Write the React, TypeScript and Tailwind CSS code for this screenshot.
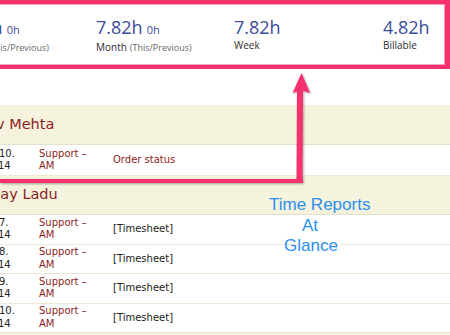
import React from "react";

const sans = { fontFamily: '"Open Sans", "Noto Sans", sans-serif' };
const dv = { fontFamily: '"DejaVu Sans", "Noto Sans", sans-serif' };

function Stat({ cls, value, prev, label, sub }: { cls: string; value: string; prev?: string; label: string; sub?: string }) {
  return (
    <div className={cls + " shrink-0 flex flex-col whitespace-nowrap"}>
      <div className="leading-[22px] text-[#3b4c9b]">
        <span className="text-[18px]">{value}</span>
        {prev ? <span className="text-[11px] ml-[4px]">{prev}</span> : null}
      </div>
      <div className="leading-[12px] text-[#2b2b2b] text-[10px]">
        {label}
        {sub ? <span className="text-[9px] text-[#666] ml-[3px]">{sub}</span> : null}
      </div>
    </div>
  );
}

function NameRow({ name, ml, h }: { name: string; ml: string; h: string }) {
  return (
    <div className={"flex items-center bg-[#f5f2de] border-b border-[#e3e0cd] " + h}>
      <span className={"text-[14.5px] text-[#8b1d1d] whitespace-nowrap " + ml}>{name}</span>
    </div>
  );
}

function Row({ d1, d2, desc, h, descRed }: { d1: string; d2: string; desc: string; h: string; descRed?: boolean }) {
  return (
    <div className={"flex items-center bg-white border-b border-[#ebe8d8] text-[10px] leading-[12.5px] " + h}>
      <div className="w-[39px] shrink-0 flex flex-col text-[#222]">
        <span className="ml-[-1px]">{d1}</span>
        <span className="ml-[-2px]">{d2}</span>
      </div>
      <div className="w-[74px] shrink-0 flex flex-col text-[#8b1d1d]">
        <span>Support –</span>
        <span>AM</span>
      </div>
      <div className={descRed ? "text-[#8b1d1d]" : "text-[#222]"}>{desc}</div>
    </div>
  );
}

export default function App() {
  return (
    <div className="relative w-[450px] h-[335px] overflow-hidden bg-white">
      <div className="h-[69px] border-t-[4px] border-b-[4px] border-r-[5px] border-[#f7306e]" style={sans}>
        <div className="h-full border-t border-b border-r border-[#ff9dbb] bg-white flex pt-[11px]">
          <Stat cls="ml-[-44px] w-[140px]" value="7.82h" prev="0h" label="Today" sub="(This/Previous)" />
          <Stat cls="w-[138px]" value="7.82h" prev="0h" label="Month" sub="(This/Previous)" />
          <Stat cls="w-[149px]" value="7.82h" label="Week" />
          <Stat cls="w-[80px]" value="4.82h" label="Billable" />
        </div>
      </div>

      <div className="mt-[36px]" style={dv}>
        <NameRow name="Vaibhav Mehta" ml="ml-[-53px]" h="h-[40px]" />
        <Row d1="10." d2="14" desc="Order status" h="h-[31px]" descRed />
        <NameRow name="Sanjay Ladu" ml="ml-[-31px]" h="h-[39px]" />
        <Row d1="7." d2="14" desc="[Timesheet]" h="h-[29.5px]" />
        <Row d1="8." d2="14" desc="[Timesheet]" h="h-[29.5px]" />
        <Row d1="9." d2="14" desc="[Timesheet]" h="h-[29.5px]" />
        <Row d1="10." d2="14" desc="[Timesheet]" h="h-[29.5px]" />
        <NameRow name="" ml="" h="h-[30px]" />
      </div>

      <svg
        className="absolute left-0 top-0 pointer-events-none drop-shadow-[1px_1px_1px_rgba(0,0,0,0.35)]"
        width="450"
        height="335"
        viewBox="0 0 450 335"
      >
        <rect x="-5" y="179" width="308" height="4" fill="#f7306e" />
        <polygon points="297,90 303,90 302.5,183 296.5,183" fill="#f7306e" />
        <polygon points="301.5,73 310,93 301,90 292.5,93" fill="#f7306e" />
      </svg>

      <div
        className="absolute left-[269px] top-[195px] text-[17px] leading-[20px] text-[#2a8ff0] whitespace-nowrap"
        style={{ fontFamily: '"Liberation Sans", Arial, sans-serif' }}
      >
        Time Reports
      </div>
      <div
        className="absolute left-[302px] top-[216px] text-[17px] leading-[20px] text-[#2a8ff0] whitespace-nowrap"
        style={{ fontFamily: '"Liberation Sans", Arial, sans-serif' }}
      >
        At
      </div>
      <div
        className="absolute left-[284px] top-[236px] text-[17px] leading-[20px] text-[#2a8ff0] whitespace-nowrap"
        style={{ fontFamily: '"Liberation Sans", Arial, sans-serif' }}
      >
        Glance
      </div>
    </div>
  );
}
